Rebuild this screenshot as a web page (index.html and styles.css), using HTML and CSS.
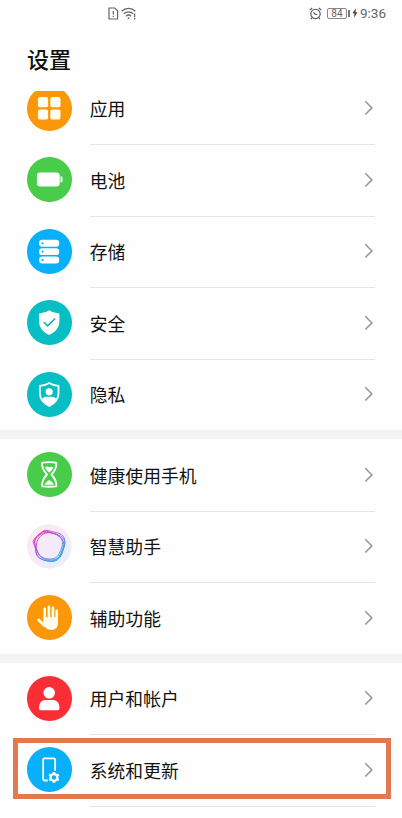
FILE: index.html
```
<!DOCTYPE html>
<html lang="zh-CN">
<head>
<meta charset="utf-8">
<title>设置</title>
<link rel="stylesheet" href="styles.css">
</head>
<body>
<div class="phone">
  <header class="status">
    <div class="status-left">
      <svg width="11" height="13" viewBox="0 0 11 13" fill="none" stroke="#666" stroke-width="1.2"><path d="M1 1h5.800L9.600 3.800V12H1z"/><path d="M5.300 4v3.600M5.300 8.700v1.400"/></svg>
      <svg width="16" height="13" viewBox="0 0 16 13" fill="none" stroke="#666" stroke-width="1.300"><path d="M.6 4.300C4.700.5 10.300.5 14.400 4.300M2.800 6.800C5.500 4.200 9.500 4.200 12.200 6.800M5 9.200C6.500 7.800 8.500 7.800 10 9.200"/><circle cx="7.500" cy="11.200" r=".9" fill="#666" stroke="none"/><path d="M13.600 6.500v3.700M13.600 11v1.400"/></svg>
    </div>
    <div class="status-right">
      <svg width="13" height="13" viewBox="0 0 13 13" fill="none" stroke="#555" stroke-width="1.100"><circle cx="6.500" cy="6.900" r="4.700"/><path d="M.7 3.200 3.200 1M12.300 3.200 9.800 1M4.300 5.300l2.200 2.100 1.700.1M3.200 10.700 2 12.200M9.800 10.700 11 12.200"/></svg>
      <span class="battery">84</span><span class="battery-tip"></span>
      <svg class="bolt" width="6" height="10" viewBox="0 0 6 10"><path fill="#444" d="M3.800.3.500 5.300h2L2 9.700l3.500-5.400h-2z"/></svg>
      <span class="time">9:36</span>
    </div>
  </header>
  <h1 class="title">设置</h1>
  <main class="list">
    <section class="group first">
      <div class="row"><svg class="icon orange" viewBox="0 0 45 45" fill="#fffdf0"><rect x="11" y="11.200" width="10.300" height="10.300" rx="2.200"/><rect x="23.500" y="11.200" width="10.300" height="10.300" rx="2.200"/><rect x="11" y="23.600" width="10.300" height="10.300" rx="2.200"/><rect x="23.500" y="23.600" width="10.300" height="10.300" rx="2.200"/></svg><div class="body"><span>应用</span><svg class="chev" viewBox="0 0 10 16"><path d="m1.300 1.300 6.600 6.600-6.600 6.600"/></svg></div></div>
      <div class="row"><svg class="icon green" viewBox="0 0 45 45" fill="#fff"><rect x="10" y="15.700" width="23" height="14" rx="3"/><path d="M33.800 19.800h1.200q.8 0 .8.800v4.200q0 .8-.8.800h-1.200z"/></svg><div class="body"><span>电池</span><svg class="chev" viewBox="0 0 10 16"><path d="m1.300 1.300 6.600 6.600-6.600 6.600"/></svg></div></div>
      <div class="row"><svg class="icon blue" viewBox="0 0 45 45"><g fill="#fff"><rect x="12.200" y="10.900" width="20.300" height="7" rx="3.200"/><rect x="12.200" y="19.300" width="20.300" height="7" rx="3.200"/><rect x="12.200" y="27.700" width="20.300" height="7" rx="3.200"/></g><g fill="#08a8f5"><circle cx="15.700" cy="14.400" r="1.100"/><circle cx="15.700" cy="22.800" r="1.100"/><circle cx="15.700" cy="31.200" r="1.100"/></g></svg><div class="body"><span>存储</span><svg class="chev" viewBox="0 0 10 16"><path d="m1.300 1.300 6.600 6.600-6.600 6.600"/></svg></div></div>
      <div class="row"><svg class="icon teal" viewBox="0 0 45 45"><path fill="#fff" d="M22.400 10.400c2.800 1.900 6 2.700 9.100 2.900q1.200.1 1.200 1.300v6.800c0 6.300-4.200 10.900-9.400 13.400q-.9.400-1.800 0c-5.200-2.500-9.400-7.100-9.400-13.400v-6.800q0-1.200 1.200-1.300c3.100-.2 6.300-1 9.100-2.900z"/><path fill="none" stroke="#10aeb5" stroke-width="1.500" d="m16.900 22.200 4 3.900 7.500-7.500"/></svg><div class="body"><span>安全</span><svg class="chev" viewBox="0 0 10 16"><path d="m1.300 1.300 6.600 6.600-6.600 6.600"/></svg></div></div>
      <div class="row last"><svg class="icon teal" viewBox="0 0 45 45"><path fill="none" stroke="#fff" stroke-width="1.800" stroke-linejoin="round" d="M22.400 11.200c2.800 1.900 5.900 2.600 9.400 2.900v7.400c0 5.800-3.800 10.100-9.400 12.800-5.600-2.700-9.400-7-9.400-12.800v-7.400c3.500-.3 6.600-1 9.400-2.900z"/><g fill="#fff"><circle cx="22.400" cy="20" r="3.600"/><path d="M15 27.300q2.200-2.400 4.300-2.400h6.200q2.100 0 4.300 2.400c-1.500 3-4.100 5.300-7.400 7-3.300-1.700-5.900-4-7.400-7z"/></g></svg><div class="body"><span>隐私</span><svg class="chev" viewBox="0 0 10 16"><path d="m1.300 1.300 6.600 6.600-6.600 6.600"/></svg></div></div>
    </section>
    <section class="group">
      <div class="row"><svg class="icon green" viewBox="0 0 45 45"><path fill="none" stroke="#fff" stroke-width="1.900" stroke-linejoin="round" d="M15.800 10.700q6.600-1 13.200 0 .8.200.7 1.100c-.2 5-1.900 7.500-5 10.900 3.100 3.400 4.800 5.900 5 10.900q.1.900-.7 1.100-6.600.8-13.200 0-.8-.2-.7-1.100c.2-5 1.900-7.500 5-10.900-3.100-3.400-4.800-5.900-5-10.900q-.1-.9.700-1.100z"/><path fill="#fff" d="M18.200 15.500q2.200-1.600 4.200-.1 2.200-1 4.200.1-.9 2.800-4.200 5.400-3.300-2.600-4.200-5.400zM17.500 32.700q2.300-3.300 4.900-4.500 2.600 1.200 4.900 4.500-4.900.7-9.800 0z"/></svg><div class="body"><span>健康使用手机</span><svg class="chev" viewBox="0 0 10 16"><path d="m1.300 1.300 6.600 6.600-6.600 6.600"/></svg></div></div>
      <div class="row"><svg class="icon" viewBox="0 0 45 45">
        <defs><linearGradient id="bg" x1="0" y1="0" x2="1" y2="1"><stop offset="0" stop-color="#fbeaec"/><stop offset=".5" stop-color="#f6e9fa"/><stop offset="1" stop-color="#e3f1ff"/></linearGradient><linearGradient id="ring" gradientUnits="userSpaceOnUse" x1="12" y1="12" x2="31" y2="34"><stop offset="0" stop-color="#dc3cc4"/><stop offset=".5" stop-color="#9a70e0"/><stop offset="1" stop-color="#2ea0e4"/></linearGradient></defs>
        <circle cx="22.500" cy="22.500" r="22.500" fill="url(#bg)"/>
        <g fill="none" stroke="url(#ring)" stroke-width="1"><path d="M15.500 7.900c3-3 6.500-.8 10.500 0 5 1 10.500 2.200 11.800 7 1.200 4.800-.6 8.600-1.700 12.800-1.500 5.500-5.500 10.300-11 10.100-5.600-.2-12.600-1.600-15-7.100-1.400-3.300-1-7-3.600-11.500C4.700 15.500 12.200 11.200 15.500 7.900z"/><path d="M17 7.500c4-.8 6.500 1.300 10.300 2.100 4.800 1 10.200 3.800 10.900 8.400.6 4.200-2.500 7.500-3.900 11.500-1.900 5.500-6 8.300-11.300 7.900-5.700-.4-11.700-2-13.600-7.100-1.100-3-.6-6.500-1.800-10.500C6.300 15 12.500 8.500 17 7.500z"/><path d="M14.700 9.800c3.600-2.200 7.600-1.500 11.500-.5 4.600 1.200 9.400 4.400 10.500 8.500 1.200 4.300-.7 7.700-2.100 11.600-1.700 4.900-5.400 7-10.600 7-5.300 0-10.200-1.900-12.600-6.300-1.700-3.200-2.900-6.700-3.600-10.500-.7-3.900 3.200-7.600 6.900-9.800z"/><path d="M18.500 9.200c3.500-1 7-.3 10 1.100 4 1.800 7.300 4.400 7.300 8.700 0 4-1.200 6.800-3 10.500-2 4.300-5.300 6-10 5.900-5.400-.1-10-2.400-12-6.900-1.400-3.200-1.900-6.200-1-9.500 1.200-4.500 4.600-8.600 8.700-9.800z"/></g></svg><div class="body"><span>智慧助手</span><svg class="chev" viewBox="0 0 10 16"><path d="m1.300 1.300 6.600 6.600-6.600 6.600"/></svg></div></div>
      <div class="row last"><svg class="icon orange" viewBox="0 0 45 45"><g stroke="#fffdf0" stroke-width="2.600" stroke-linecap="round" fill="none"><path d="M17.900 14v12M22.100 11.900V25M26.200 13v12M30 16v12"/><path stroke-width="2.800" d="m11.800 25.300 5.400 5.200"/></g><path fill="#fffdf0" d="M16.700 22.500h14.600v5.800c0 4.300-2.400 6.900-6.300 6.900-4.300 0-6.200-1.600-8.500-4.400z"/></svg><div class="body"><span>辅助功能</span><svg class="chev" viewBox="0 0 10 16"><path d="m1.300 1.300 6.600 6.600-6.600 6.600"/></svg></div></div>
    </section>
    <section class="group">
      <div class="row"><svg class="icon red" viewBox="0 0 45 45" fill="#fff"><circle cx="22.400" cy="17" r="5.800"/><path d="M12.200 31.500c0-4.500 2.800-7.400 6.500-7.400h7.500c3.700 0 6.500 2.900 6.500 7.400v1.300q0 1.700-1.700 1.700H13.900q-1.700 0-1.700-1.700z"/></svg><div class="body"><span>用户和帐户</span><svg class="chev" viewBox="0 0 10 16"><path d="m1.300 1.300 6.600 6.600-6.600 6.600"/></svg></div></div>
      <div class="row marked"><svg class="icon blue" viewBox="0 0 45 45" fill="none" stroke="#fff"><path stroke-width="1.800" d="M28.400 24v-11.200q0-1.400-1.400-1.400H17.700q-1.400 0-1.400 1.400v19.600q0 1.400 1.400 1.400H21"/><circle cx="27.200" cy="30.700" r="3.400" stroke-width="2.300"/><path stroke-width="2.600" d="M27.200 27.200v-2M27.200 34.200v2M30.200 29l1.800-1M24.200 32.400l-1.800 1M30.200 32.400l1.800 1M24.200 29l-1.800-1"/></svg><div class="body"><span>系统和更新</span><svg class="chev" viewBox="0 0 10 16"><path d="m1.300 1.300 6.600 6.600-6.600 6.600"/></svg></div></div>
    </section>
  </main>
</div>
</body>
</html>
```
FILE: styles.css
```
*, *::after { box-sizing: border-box; }
body {
  margin: 0;
  background: #fefefe;
  color: #111;
  font-family: "Noto Sans CJK SC", sans-serif;
}
.phone {
  width: 402px;
  height: 818px;
  overflow: hidden;
  display: flex;
  flex-direction: column;
}
.status {
  height: 26px;
  flex: none;
  display: flex;
  justify-content: space-between;
  align-items: center;
  padding: 0 16px 0 108px;
  color: #666;
  font-family: Roboto, sans-serif;
}
.status svg { display: block; }
.status-left { display: flex; gap: 2px; }
.status-right { display: flex; align-items: center; }
.battery {
  width: 20px;
  height: 11px;
  margin-left: 5px;
  border: 1px solid #888;
  border-radius: 2px;
  font-size: 10px;
  line-height: 10px;
  text-align: center;
}
.battery-tip { width: 2px; height: 7px; margin-left: 1px; background: #777; }
.bolt { margin: 0 2px; }
.time { font-size: 13.500px; line-height: 16px; color: #666; }
.title {
  margin: 0;
  height: 65px;
  flex: none;
  padding: 16px 0 0 27px;
  font-size: 22px;
  line-height: 32px;
  font-weight: 500;
}
.list { flex: 1; min-height: 0; overflow: hidden; }
.group + .group { border-top: 9px solid #f3f3f3; }
.first { margin-top: -18.500px; }
.row {
  position: relative;
  height: 71.500px;
  display: flex;
  align-items: center;
  padding: 0 27px 0 27px;
}
.icon { width: 44.600px; height: 44.600px; flex: none; border-radius: 50%; }
.orange { background: #fb980a; }
.green { background: #48cc49; }
.blue { background: #08affb; }
.teal { background: #08bec5; }
.red { background: #f92f35; }
.body {
  flex: 1;
  height: 100%;
  margin-left: 18.200px;
  display: flex;
  align-items: center;
  justify-content: space-between;
  box-shadow: 0 1px #e5e5e5;
  font-size: 17.800px;
  line-height: 26px;
}
.last .body { box-shadow: none; }
.chev {
  width: 10px;
  height: 16px;
  margin-right: 1.500px;
  fill: none;
  stroke: #999;
  stroke-width: 1.600;
}
.marked::after {
  content: "";
  position: absolute;
  left: 13px;
  right: 11px;
  top: 4px;
  height: 61px;
  border: 5px solid #e47850;
}
```
